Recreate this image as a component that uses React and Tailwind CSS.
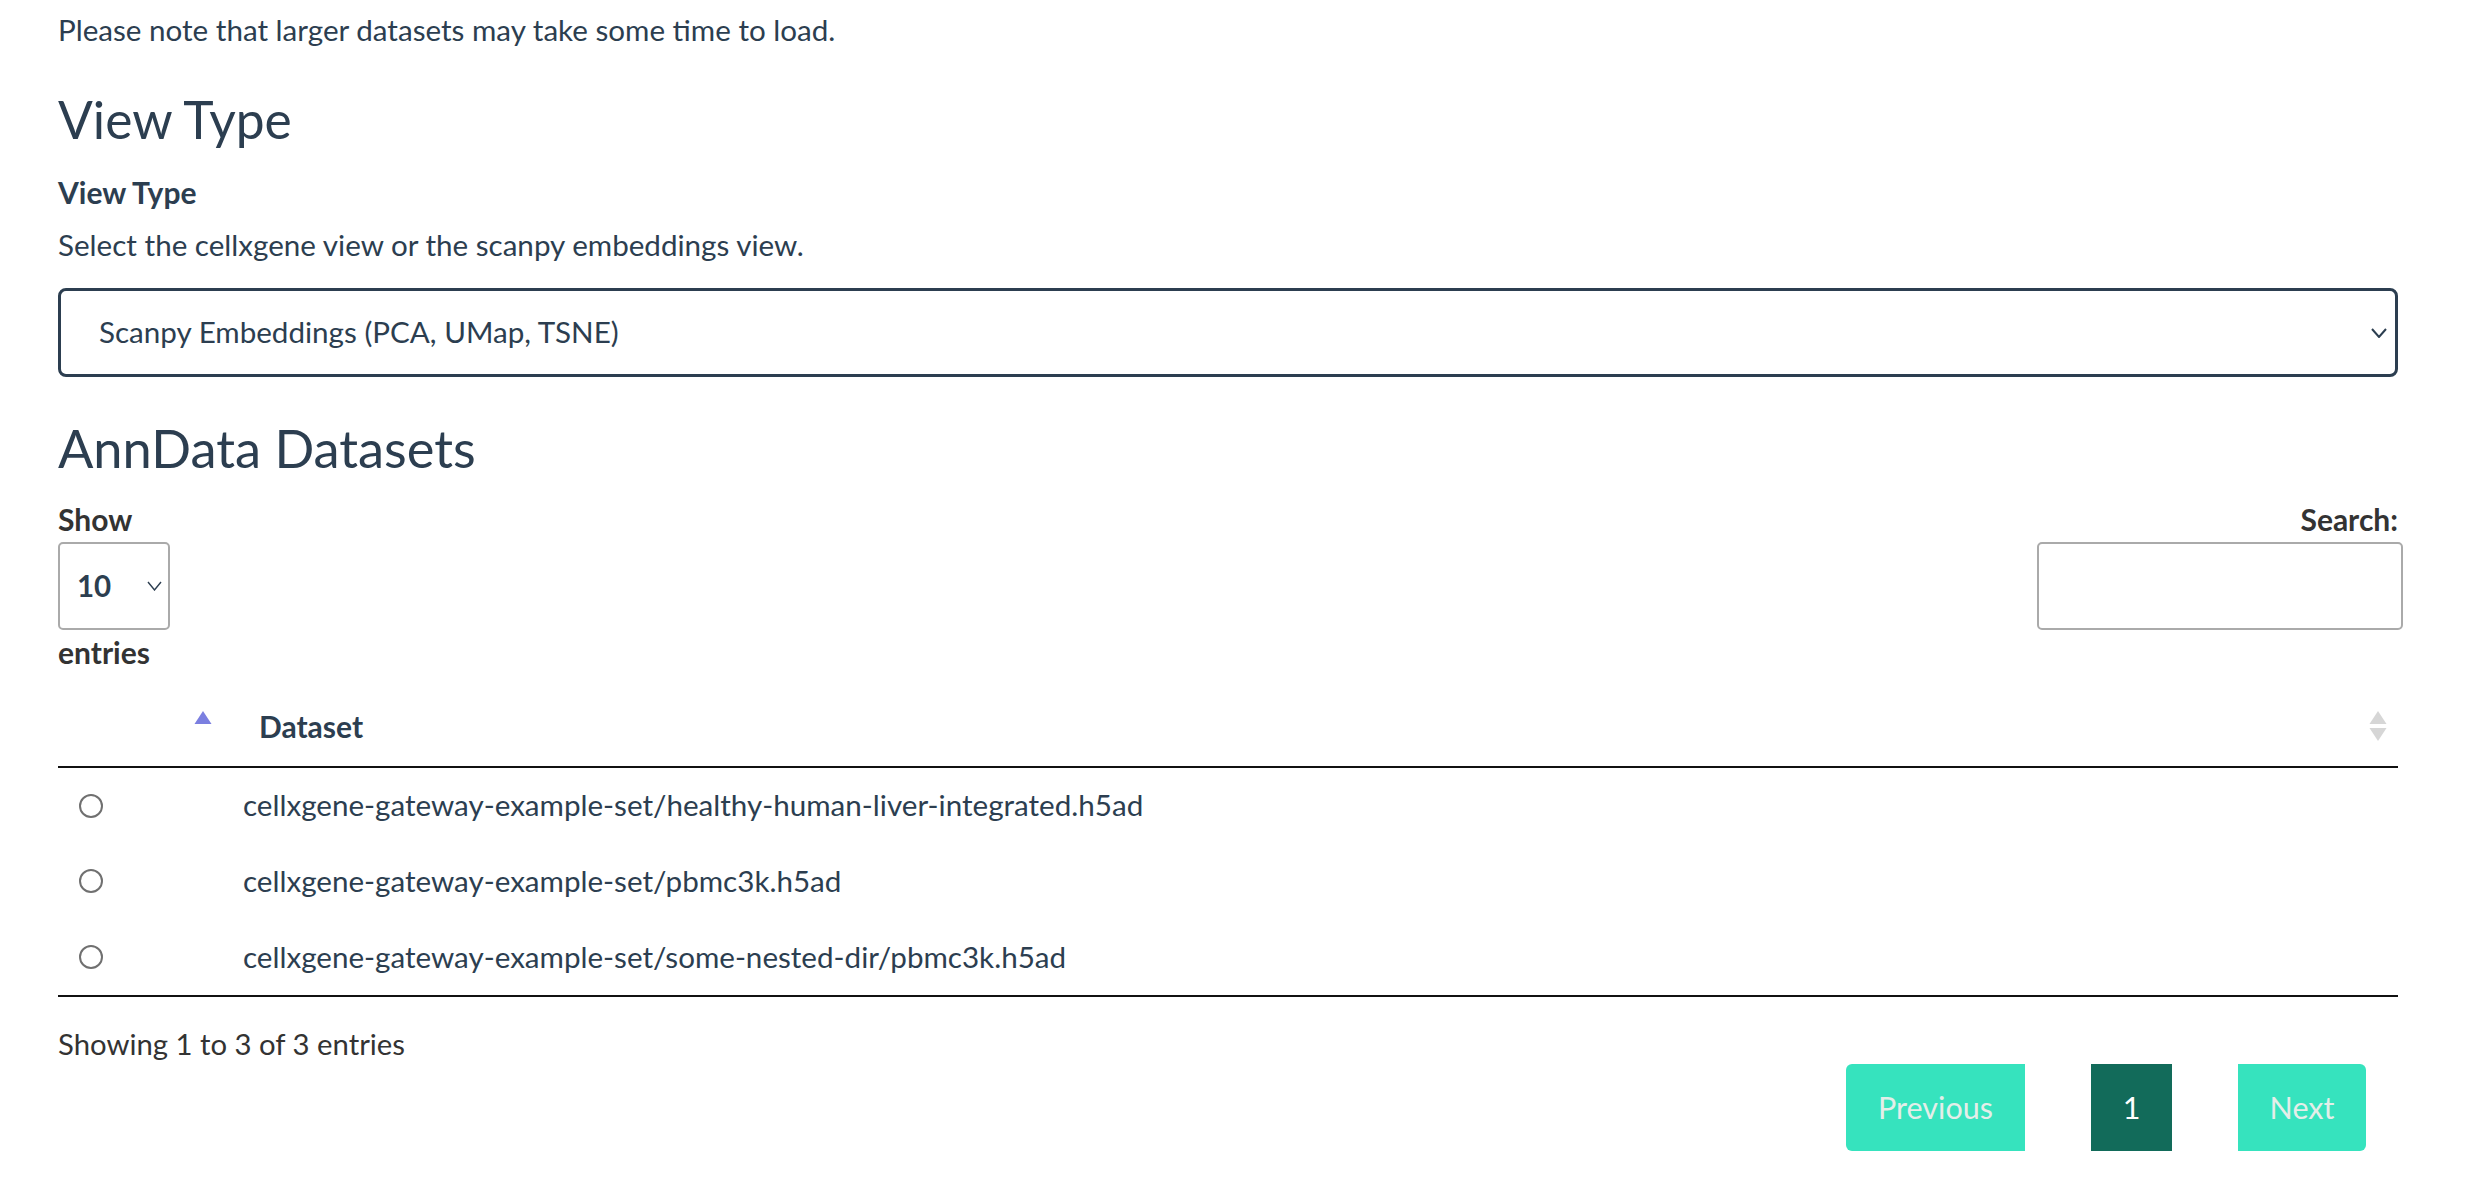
// AnnData dataset picker
const datasets = [
	'cellxgene-gateway-example-set/healthy-human-liver-integrated.h5ad',
	'cellxgene-gateway-example-set/pbmc3k.h5ad',
	'cellxgene-gateway-example-set/some-nested-dir/pbmc3k.h5ad',
];

function SortIcon({ up, down }) {
	return (
		<svg width="18" height="31" viewBox="0 0 18 31" className="shrink-0 blur-[0.4px]">
			<path d="M9 0 L17.5 13 L0.5 13 Z" fill={up} />
			<path d="M0.5 17 L17.5 17 L9 30 Z" fill={down} />
		</svg>
	);
}

function Chevron({ w, h, stroke }) {
	return (
		<svg width={w} height={h} viewBox={`0 0 ${w} ${h}`} className="shrink-0">
			<path d={`M1 1 L${w / 2} ${h - 1} L${w - 1} 1`} fill="none" stroke="#2c3e50" strokeWidth={stroke} />
		</svg>
	);
}

export default function App() {
	return (
		<div className="min-h-screen bg-white pl-[58px] pr-[74px] pt-[11px] font-[Lato,'Liberation_Sans',sans-serif] text-[29.6px] leading-[38.4px] text-[#2c3e50]">
			<p>Please note that larger datasets may take some time to load.</p>

			{/* VIEW TYPE */}
			<h2 className="mt-[40px] text-[51.5px] leading-[61.4px] font-normal">View Type</h2>
			<label className="block mt-[22.4px] font-bold text-[30px]">View Type</label>
			<p className="mt-[14.6px]">Select the cellxgene view or the scanpy embeddings view.</p>

			<div className="mt-[23.4px] h-[89px] border-[3px] border-[#2c3e50] rounded-[8px] flex items-center justify-between pl-[38px] pr-[8px]">
				<span>Scanpy Embeddings (PCA, UMap, TSNE)</span>
				<Chevron w={16} h={10} stroke={2} />
			</div>

			{/* DATASETS */}
			<h2 className="mt-[39.8px] text-[52.4px] leading-[61.4px] font-normal">AnnData Datasets</h2>

			<div className="mt-[22px] flex justify-between items-start">
				<div className="flex flex-col items-start font-bold text-[30px] text-[#333]">
					<span>Show</span>
					<div className="mt-[3.5px] w-[112px] h-[88px] border-2 border-[#aaa] rounded-[5px] flex items-center justify-between pl-[17px] pr-[6px] text-[#2c3e50] text-[29.5px]">
						<span>10</span>
						<Chevron w={15} h={10} stroke={1.4} />
					</div>
					<span className="mt-[3px]">entries</span>
				</div>
				<div className="flex flex-col items-end font-bold text-[30px] text-[#333]">
					<span>Search:</span>
					<input className="mt-[3.5px] mr-[-5px] w-[366px] h-[88px] border-2 border-[#aaa] rounded-[5px] outline-none px-3" />
				</div>
			</div>

			<div className="border-b-2 border-[#111]">
				<table className="w-full table-fixed">
					<colgroup>
						<col className="w-[169px]" />
						<col />
					</colgroup>
					<thead>
						<tr className="border-b-2 border-[#111]">
							<th className="p-0 pt-[35.6px] pb-[20.6px] pr-[15px]">
								<div className="flex justify-end">
									<SortIcon up="#7b7fe0" down="transparent" />
								</div>
							</th>
							<th className="p-0 pt-[35.6px] pb-[20.6px] pl-[32px] pr-[11px] text-left font-bold text-[30px]">
								<div className="flex items-center justify-between">
									<span>Dataset</span>
									<SortIcon up="#d6d6d6" down="#d6d6d6" />
								</div>
							</th>
						</tr>
					</thead>
					<tbody>
						{datasets.map(name => (
							<tr key={name} className="h-[76px]">
								<td className="p-0 pl-[21px] align-middle">
									<input type="radio" name="dataset" className="appearance-none block w-[24px] h-[24px] rounded-full border-2 border-[#707070] bg-white" />
								</td>
								<td className="p-0 pl-[16px] align-middle">{name}</td>
							</tr>
						))}
					</tbody>
				</table>
			</div>

			<p className="mt-[28px] text-[29.3px] text-[#333]">Showing 1 to 3 of 3 entries</p>

			<div className="mt-[0.6px] mr-[32px] flex justify-end gap-[66px] text-[30.5px]">
				<button className="w-[179px] h-[87px] rounded-l-[6px] bg-[#36e3be] text-[#e4eee9]">Previous</button>
				<button className="w-[81px] h-[87px] bg-[#126b5a] text-white">1</button>
				<button className="w-[128px] h-[87px] rounded-r-[6px] bg-[#36e3be] text-[#e4eee9]">Next</button>
			</div>
		</div>
	);
}
